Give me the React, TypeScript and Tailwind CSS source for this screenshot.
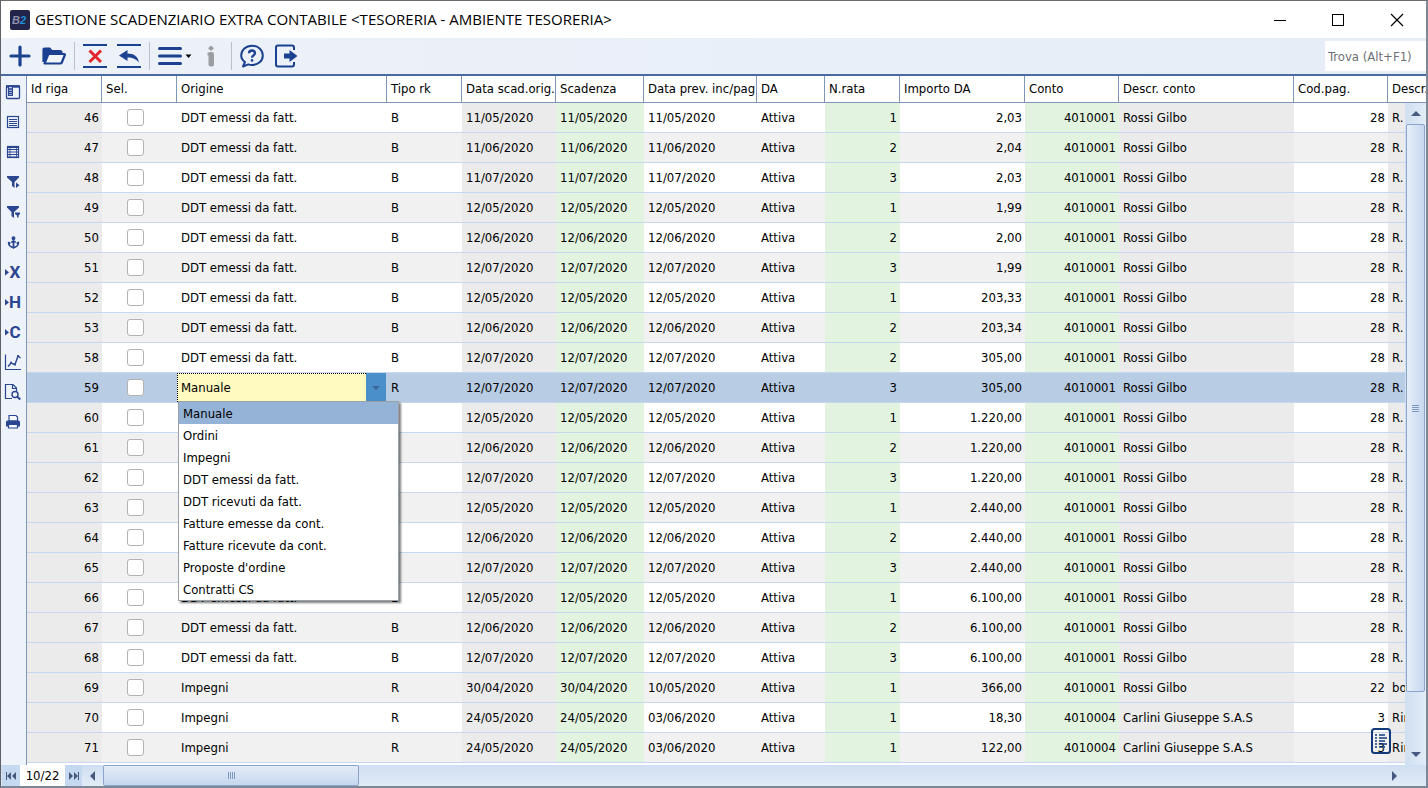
import React, { useState } from 'react';
import { clsx } from 'clsx';
import { Anchor } from 'lucide-react';

type Row = {
  id: number;
  origine: string;
  tipo: string;
  scadOrig: string;
  scadenza: string;
  prevista: string;
  rata: number;
  importo: string;
  conto: string;
  descrConto: string;
  codPag: number;
  descrPag: string;
};

const DDT = 'DDT emessi da fatt.';

const makeRow = (
  id: number,
  scadenza: string,
  rata: number,
  importo: string,
  extra: Partial<Row> = {}
): Row => ({
  id,
  origine: DDT,
  tipo: 'B',
  scadOrig: scadenza,
  scadenza,
  prevista: scadenza,
  rata,
  importo,
  conto: '4010001',
  descrConto: 'Rossi Gilbo',
  codPag: 28,
  descrPag: 'R.',
  ...extra,
});

const ROWS: Row[] = [
  makeRow(46, '11/05/2020', 1, '2,03'),
  makeRow(47, '11/06/2020', 2, '2,04'),
  makeRow(48, '11/07/2020', 3, '2,03'),
  makeRow(49, '12/05/2020', 1, '1,99'),
  makeRow(50, '12/06/2020', 2, '2,00'),
  makeRow(51, '12/07/2020', 3, '1,99'),
  makeRow(52, '12/05/2020', 1, '203,33'),
  makeRow(53, '12/06/2020', 2, '203,34'),
  makeRow(58, '12/07/2020', 2, '305,00'),
  makeRow(59, '12/07/2020', 3, '305,00', { origine: 'Manuale', tipo: 'R' }),
  makeRow(60, '12/05/2020', 1, '1.220,00'),
  makeRow(61, '12/06/2020', 2, '1.220,00'),
  makeRow(62, '12/07/2020', 3, '1.220,00'),
  makeRow(63, '12/05/2020', 1, '2.440,00'),
  makeRow(64, '12/06/2020', 2, '2.440,00'),
  makeRow(65, '12/07/2020', 3, '2.440,00'),
  makeRow(66, '12/05/2020', 1, '6.100,00'),
  makeRow(67, '12/06/2020', 2, '6.100,00'),
  makeRow(68, '12/07/2020', 3, '6.100,00'),
  makeRow(69, '30/04/2020', 1, '366,00', {
    origine: 'Impegni',
    tipo: 'R',
    prevista: '10/05/2020',
    codPag: 22,
    descrPag: 'bo',
  }),
  makeRow(70, '24/05/2020', 1, '18,30', {
    origine: 'Impegni',
    tipo: 'R',
    prevista: '03/06/2020',
    conto: '4010004',
    descrConto: 'Carlini Giuseppe S.A.S',
    codPag: 3,
    descrPag: 'Rin',
  }),
  makeRow(71, '24/05/2020', 1, '122,00', {
    origine: 'Impegni',
    tipo: 'R',
    prevista: '03/06/2020',
    conto: '4010004',
    descrConto: 'Carlini Giuseppe S.A.S',
    codPag: 3,
    descrPag: 'Rin',
  }),
];

const SELECTED_ID = 59;

const COLUMNS = [
  { label: 'Id riga', width: 'w-[75px]' },
  { label: 'Sel.', width: 'w-[75px]' },
  { label: 'Origine', width: 'w-[210px]' },
  { label: 'Tipo rk', width: 'w-[75px]' },
  { label: 'Data scad.orig.', width: 'w-[94px]' },
  { label: 'Scadenza', width: 'w-[88px]' },
  { label: 'Data prev. inc/pag', width: 'w-[113px]' },
  { label: 'DA', width: 'w-[68px]' },
  { label: 'N.rata', width: 'w-[75px]' },
  { label: 'Importo DA', width: 'w-[125px]' },
  { label: 'Conto', width: 'w-[94px]' },
  { label: 'Descr. conto', width: 'w-[175px]' },
  { label: 'Cod.pag.', width: 'w-[94px]' },
  { label: 'Descr.', width: '' },
];

const ORIGINI = [
  'Manuale',
  'Ordini',
  'Impegni',
  'DDT emessi da fatt.',
  'DDT ricevuti da fatt.',
  'Fatture emesse da cont.',
  'Fatture ricevute da cont.',
  "Proposte d'ordine",
  'Contratti CS',
];

const IconButton: React.FC<{
  label: string;
  className?: string;
  children: React.ReactNode;
}> = ({ label, className, children }) => (
  <button
    type="button"
    aria-label={label}
    className={clsx('flex shrink-0 items-center justify-center', className)}
  >
    {children}
  </button>
);

const Separator = () => <div className="mx-2 h-7 w-px bg-[#b9c0cc]" />;

const TitleBar = () => (
  <header className="flex h-[37px] shrink-0 items-center bg-white pl-[9px]">
    <svg width="20" height="20" viewBox="0 0 20 20" className="shrink-0">
      <rect width="20" height="20" rx="2" fill="#232449" />
      <text x="2" y="14" fontSize="11" fontWeight="700" fontStyle="italic" fontFamily="Liberation Sans, sans-serif" fill="#8b93ad">
        B<tspan fill="#1f8fd6">2</tspan>
      </text>
    </svg>
    <h1 className="ml-[5px] flex-1 truncate font-['Open_Sans','Noto_Sans',sans-serif] text-[15px] text-black">
      GESTIONE SCADENZIARIO EXTRA CONTABILE &lt;TESORERIA - AMBIENTE TESORERIA&gt;
    </h1>
    <div className="flex">
      <IconButton label="Riduci a icona" className="h-9 w-[58px]">
        <svg width="14" height="14" stroke="#000" fill="none">
          <path d="M1 7.5h12" />
        </svg>
      </IconButton>
      <IconButton label="Ingrandisci" className="h-9 w-[58px]">
        <svg width="14" height="14" stroke="#000" fill="none">
          <rect x="1.5" y="1.5" width="11" height="11" />
        </svg>
      </IconButton>
      <IconButton label="Chiudi" className="h-9 w-[59px]">
        <svg width="14" height="14" stroke="#000" fill="none" strokeWidth="1.2">
          <path d="M1 1l12 12M13 1L1 13" />
        </svg>
      </IconButton>
    </div>
  </header>
);

const Toolbar = () => (
  <div
    role="toolbar"
    aria-label="Comandi"
    className="flex h-9 shrink-0 items-center bg-linear-to-r from-[#edf2f9] to-[#e6edf7] pl-[7px]"
  >
    <IconButton label="Nuovo" className="w-6">
      <svg width="24" height="24" viewBox="0 0 24 24" stroke="#1b4190" strokeWidth="3.2" strokeLinecap="round">
        <path d="M3 12h18M12 3v18" />
      </svg>
    </IconButton>
    <IconButton label="Apri" className="ml-[10px] w-6">
      <svg width="24" height="24" viewBox="0 0 24 24" fill="none" stroke="#1b4190" strokeWidth="2.2" strokeLinejoin="round">
        <path d="M1.5 18V5.500q0-1 1-1h5l2 2.500h8.500q1.500 0 1.500 1.500V10" fill="#1b4190" />
        <path d="M2.500 19.500L6 11q.4-1 1.500-1h14.500q1.200 0 .8 1l-3 7.500q-.4 1-1.500 1z" fill="#f1f5fb" />
      </svg>
    </IconButton>
    <Separator />
    <IconButton label="Elimina" className="w-6">
      <svg width="24" height="26" viewBox="0 0 24 26" fill="none">
        <path d="M0 2h24M0 24h24" stroke="#1b4190" strokeWidth="2" />
        <path d="M6.500 7.500l11.500 11.500M18 7.500L6.500 19" stroke="#e1262d" strokeWidth="3" />
      </svg>
    </IconButton>
    <IconButton label="Annulla" className="ml-[10px] w-6">
      <svg width="24" height="26" viewBox="0 0 24 26" fill="none">
        <path d="M0 2h24M0 24h24" stroke="#1b4190" strokeWidth="2" />
        <path d="M2 12.500l8.500-5.500v3.500c6.500 0 10.500 3 11.500 9-3-3.500-6-5-11.500-5V18z" fill="#1b4190" />
      </svg>
    </IconButton>
    <Separator />
    <IconButton label="Menu" className="w-[34px]">
      <svg width="34" height="24" viewBox="0 0 34 24">
        <path d="M1.500 4.500h21M1.500 12h21M1.500 19.500h21" stroke="#1b4190" strokeWidth="3" strokeLinecap="round" />
        <path d="M27.500 10.500h6l-3 3.500z" fill="#000" />
      </svg>
    </IconButton>
    <IconButton label="Informazioni" className="ml-[7px] w-6">
      <svg width="24" height="24" viewBox="0 0 24 24" fill="#9a9da1">
        <path d="M12 1.500l3 2.700-3 2.700-3-2.700z" />
        <rect x="9.500" y="8" width="5.500" height="14.500" rx="2.200" />
        <path d="M8.500 9.500q0-1 1-1h2.500v3H8.500z" />
      </svg>
    </IconButton>
    <Separator />
    <IconButton label="Aiuto" className="w-6">
      <svg width="24" height="24" viewBox="0 0 24 24" fill="none" stroke="#1b4190" strokeWidth="2">
        <path d="M3 22.500l2-4.500C2.500 16.300 1.200 14 1.200 11.500 1.200 6 6 1.700 12 1.700S22.800 6 22.800 11.500 18 21 12 21c-1.300 0-2.600-.2-3.700-.6z" strokeLinejoin="round" />
        <path d="M9 9.300C9 7.500 10.300 6.500 12 6.500s3 1 3 2.700c0 2.200-3 2.300-3 4.500" strokeWidth="2.300" />
        <path d="M12 15.200v2.400" strokeWidth="2.400" />
      </svg>
    </IconButton>
    <IconButton label="Esci" className="ml-[10px] w-6">
      <svg width="24" height="24" viewBox="0 0 24 24" fill="none" stroke="#1b4190" strokeWidth="2">
        <path d="M20 6V3.500q0-2-2-2H4q-2 0-2 2v17q0 2 2 2h14q2 0 2-2V18" />
        <path d="M10 9.500h5.500V6l8 6-8 6v-3.500H10z" fill="#1b4190" stroke="none" />
      </svg>
    </IconButton>
    <input
      type="text"
      aria-label="Trova"
      placeholder="Trova (Alt+F1)"
      className="ml-auto h-[30px] w-[101px] bg-white px-[3px] outline-none placeholder:text-[#6d7076]"
    />
  </div>
);

const LetterIcon: React.FC<{ letter: string }> = ({ letter }) => (
  <svg width="18" height="18" viewBox="0 0 18 18" fill="#2a4690">
    <path d="M1 6l4 3.500L1 12.500z" />
    <text x="11" y="15" textAnchor="middle" fontSize="17" fontWeight="700" fontFamily="Liberation Sans Narrow, Roboto, sans-serif">
      {letter}
    </text>
  </svg>
);

const SIDE_TOOLS: { label: string; icon: React.ReactNode }[] = [
  {
    label: 'Colonne',
    icon: (
      <svg width="16" height="16" viewBox="0 0 16 16" fill="none" stroke="#2a4690">
        <rect x="1.500" y="2" width="13" height="12.500" rx="1" strokeWidth="1.300" />
        <path d="M1 2.500h14" strokeWidth="2.400" />
        <rect x="3.500" y="2.500" width="4" height="9" fill="#c9d5ea" />
        <path d="M3.500 5h4M3.500 7.300h4M3.500 9.500h4" strokeWidth="1.300" />
      </svg>
    ),
  },
  {
    label: 'Elenco',
    icon: (
      <svg width="16" height="16" viewBox="0 0 16 16" fill="none" stroke="#2a4690">
        <rect x="2.500" y="2.500" width="11" height="11" strokeWidth="1.200" />
        <path d="M4 5.500h8M4 7.500h8M4 9.500h8M4 11.500h8" />
      </svg>
    ),
  },
  {
    label: 'Griglia',
    icon: (
      <svg width="16" height="16" viewBox="0 0 16 16" fill="none" stroke="#2a4690">
        <rect x="2.500" y="2.500" width="11" height="11" strokeWidth="1.200" />
        <path d="M2 3.500h12M2 5.500h12M2 8h12M2 10.500h12M2 13h12" strokeWidth="1.200" />
        <path d="M5 2v12M11.500 2v12" strokeWidth=".8" />
      </svg>
    ),
  },
  {
    label: 'Filtra',
    icon: (
      <svg width="16" height="16" viewBox="0 0 16 16" fill="#2a4690">
        <path d="M2 2h12v1.500L9.500 8v6L7 12V8L2 3.500z" />
        <path d="M11 8.500l3.500 2.700-3.500 2.800z" />
      </svg>
    ),
  },
  {
    label: 'Filtro avanzato',
    icon: (
      <svg width="16" height="16" viewBox="0 0 16 16" fill="#2a4690">
        <path d="M2 2h12v1.500L9 8v6L6.500 12V8L2 3.500z" />
        <path d="M10 8.500h5V10l-1.500 1.500V14L12 13v-1.500L10 10z" />
      </svg>
    ),
  },
  { label: 'Blocca', icon: <Anchor size={13} color="#2a4690" strokeWidth={3.2} /> },
  { label: 'Esporta X', icon: <LetterIcon letter="X" /> },
  { label: 'Esporta H', icon: <LetterIcon letter="H" /> },
  { label: 'Esporta C', icon: <LetterIcon letter="C" /> },
  {
    label: 'Grafico',
    icon: (
      <svg width="18" height="18" viewBox="0 0 18 18" fill="none" stroke="#2a4690" strokeWidth="1.200">
        <path d="M1.500 1.500v15h15.500" />
        <path d="M4 13.500L7 10l4 1.500 3-8.500 2.500 2" strokeWidth="1.400" />
        <path d="M6.300 9.500h1.500M10.300 11.500h1.500M13.300 3h1.500" strokeWidth="2" />
      </svg>
    ),
  },
  {
    label: 'Anteprima',
    icon: (
      <svg width="18" height="18" viewBox="0 0 18 18" fill="none" stroke="#2a4690" strokeWidth="1.200">
        <path d="M12.500 8V5L9 1.500H1.500v14H8" />
        <path d="M8.500 1.500V5.500h4" />
        <circle cx="11" cy="11.500" r="3" strokeWidth="1.400" />
        <path d="M13.300 13.800l3 2.700" strokeWidth="2" />
      </svg>
    ),
  },
  {
    label: 'Stampa',
    icon: (
      <svg width="16" height="16" viewBox="0 0 16 16" fill="#2a4690">
        <path d="M4 1.500h7L12.500 3v4H4z" fill="#f4f7fc" stroke="#2a4690" strokeWidth="1.200" />
        <path d="M1 8q0-1.500 1.500-1.500h11Q15 6.500 15 8v4.500h-2v-2H3v2H1z" />
        <path d="M3.500 10.500h9v3.500h-9z" fill="#f4f7fc" stroke="#2a4690" strokeWidth="1.200" />
      </svg>
    ),
  },
];

const Sidebar = () => (
  <nav aria-label="Strumenti griglia" className="flex w-[26px] shrink-0 flex-col border-r border-[#7f95ba] bg-[#eef2f9] pt-px">
    {SIDE_TOOLS.map((tool) => (
      <IconButton key={tool.label} label={tool.label} className="h-[30px] w-6">
        {tool.icon}
      </IconButton>
    ))}
  </nav>
);

const OrigineEditor = () => {
  const [value, setValue] = useState('Manuale');
  const [open, setOpen] = useState(true);

  const choose = (item: string) => {
    setValue(item);
    setOpen(false);
  };

  return (
    <div className="relative flex h-[29px] pr-px">
      <select
        aria-label="Origine"
        value={value}
        onChange={(e) => choose(e.target.value)}
        className="min-w-0 flex-1 appearance-none border-t border-l border-dotted border-black bg-[#fffac0] pl-[3px] outline-none"
      >
        {ORIGINI.map((item) => (
          <option key={item}>{item}</option>
        ))}
      </select>
      <button
        type="button"
        aria-label="Apri elenco"
        aria-expanded={open}
        onClick={() => setOpen(!open)}
        className="flex w-5 items-center justify-center bg-[#4a8fc7]"
      >
        <svg width="8" height="4" fill="#3f6398">
          <path d="M0 0h8L4 4z" />
        </svg>
      </button>
      {open && (
        <ul
          role="listbox"
          aria-label="Origini"
          className="absolute top-7 left-px z-10 w-[221px] border border-[#9aa0a8] bg-white shadow-[2px_2px_2px_rgba(0,0,0,0.5)]"
        >
          {ORIGINI.map((item) => (
            <li
              key={item}
              role="option"
              aria-selected={item === value}
              onClick={() => choose(item)}
              className={clsx('h-[22px] px-1 leading-6', item === value && 'bg-[#95b3d7]')}
            >
              {item}
            </li>
          ))}
        </ul>
      )}
    </div>
  );
};

const GridRow: React.FC<{ row: Row; striped: boolean }> = ({ row, striped }) => {
  const selected = row.id === SELECTED_ID;
  const grey = selected ? '' : 'bg-[#ebebeb]';
  const green = selected ? '' : 'bg-[#e2f4e0]';
  const cell = 'overflow-hidden border-b border-[#c5d8ee] pl-1 whitespace-nowrap';
  const num = 'overflow-hidden border-b border-[#c5d8ee] pr-[3px] text-right whitespace-nowrap';

  return (
    <tr className={clsx('h-[30px]', selected ? 'bg-[#b8cce4]' : striped ? 'bg-[#f1f1f1]' : 'bg-white')}>
      <td className={clsx(num, grey)}>{row.id}</td>
      <td className="border-b border-[#c5d8ee] pr-2">
        <input
          type="checkbox"
          aria-label={`Seleziona riga ${row.id}`}
          className="mx-auto block size-[17px] appearance-none rounded-[3px] border border-[#b2b2b2] bg-white checked:bg-[#4a8fc7]"
        />
      </td>
      {selected ? (
        <td className="border-b border-[#c5d8ee] p-0">
          <OrigineEditor />
        </td>
      ) : (
        <td className={cell}>{row.origine}</td>
      )}
      <td className={cell}>{row.tipo}</td>
      <td className={clsx(cell, grey)}>{row.scadOrig}</td>
      <td className={clsx(cell, green)}>{row.scadenza}</td>
      <td className={cell}>{row.prevista}</td>
      <td className={cell}>Attiva</td>
      <td className={clsx(num, green)}>{row.rata}</td>
      <td className={num}>{row.importo}</td>
      <td className={clsx(num, green)}>{row.conto}</td>
      <td className={clsx(cell, grey)}>{row.descrConto}</td>
      <td className={num}>{row.codPag}</td>
      <td className={clsx(cell, grey)}>{row.descrPag}</td>
    </tr>
  );
};

const Grid = () => (
  <table className="w-full min-w-[1390px] table-fixed border-separate border-spacing-0">
    <thead>
      <tr className="h-[27px] bg-white">
        {COLUMNS.map((col) => (
          <th
            key={col.label}
            scope="col"
            className={clsx(
              'overflow-hidden border-b border-[#7f95ba] pl-1 text-left font-normal whitespace-nowrap not-last:border-r',
              col.width
            )}
          >
            {col.label}
          </th>
        ))}
      </tr>
    </thead>
    <tbody>
      {ROWS.map((row, i) => (
        <GridRow key={row.id} row={row} striped={i % 2 === 1} />
      ))}
    </tbody>
  </table>
);

const VerticalScrollbar = () => (
  <div className="absolute top-[27px] right-0 bottom-0 flex w-[21px] flex-col items-center bg-linear-to-r from-[#cfdff2] to-[#e3ecf7]">
    <IconButton label="Scorri su" className="h-[21px] w-full">
      <svg width="10" height="5" fill="#465a80">
        <path d="M5 0l5 5H0z" />
      </svg>
    </IconButton>
    <div className="flex w-[19px] flex-[568] flex-col items-center justify-center gap-px rounded-[2px] border border-[#8aa4cb] bg-linear-to-r from-[#e6eef8] to-[#c6d8ee]">
      <i className="h-px w-[7px] bg-[#7f9ac4]" />
      <i className="h-px w-[7px] bg-[#7f9ac4]" />
      <i className="h-px w-[7px] bg-[#7f9ac4]" />
      <i className="h-px w-[7px] bg-[#7f9ac4]" />
    </div>
    <div className="flex-[52]" />
    <IconButton label="Scorri giù" className="h-[21px] w-full">
      <svg width="10" height="5" fill="#465a80">
        <path d="M0 0h10L5 5z" />
      </svg>
    </IconButton>
  </div>
);

const BottomBar = () => (
  <footer className="flex h-[21px] shrink-0 bg-linear-to-b from-[#cfdff2] to-[#e1ebf6] pl-px">
    <IconButton label="Prima riga" className="w-[18px] bg-[#c5d9f1]">
      <svg width="10" height="8" fill="#465a80">
        <path d="M0 0h1v8H0zM5 0v8L1 4zM10 0v8L6 4z" />
      </svg>
    </IconButton>
    <span className="w-[45px] bg-white text-center leading-[21px]">10/22</span>
    <IconButton label="Ultima riga" className="w-[17px] bg-[#c5d9f1]">
      <svg width="10" height="8" fill="#465a80">
        <path d="M0 0l4 4-4 4zM5 0l4 4-4 4zM9 0h1v8H9z" />
      </svg>
    </IconButton>
    <IconButton label="Scorri a sinistra" className="w-[21px]">
      <svg width="5" height="10" fill="#465a80">
        <path d="M5 0v10L0 5z" />
      </svg>
    </IconButton>
    <div className="flex flex-1">
      <div className="flex w-1/5 items-center justify-center gap-px rounded-[2px] border border-[#8aa4cb] bg-linear-to-b from-[#e3ecf7] to-[#c6d8ee]">
        <i className="h-[7px] w-px bg-[#7f9ac4]" />
        <i className="h-[7px] w-px bg-[#7f9ac4]" />
        <i className="h-[7px] w-px bg-[#7f9ac4]" />
        <i className="h-[7px] w-px bg-[#7f9ac4]" />
      </div>
    </div>
    <IconButton label="Scorri a destra" className="mr-[21px] w-[21px]">
      <svg width="5" height="10" fill="#465a80">
        <path d="M0 0l5 5-5 5z" />
      </svg>
    </IconButton>
  </footer>
);

const App: React.FC = () => {
  return (
    <div className="flex h-screen flex-col overflow-hidden border-t border-r-2 border-b-2 border-l border-t-[#6b6b6b] border-r-[#7c8797] border-b-[#7c8797] border-l-[#5f6168] bg-white font-['DejaVu_Sans_Condensed','Noto_Sans',sans-serif] text-[13px] text-black">
      <TitleBar />
      <Toolbar />
      <main className="flex min-h-0 flex-1 border-t-2 border-[#4a6aa0]">
        <Sidebar />
        <div className="relative min-w-0 flex-1 overflow-hidden">
          <Grid />
          <VerticalScrollbar />
          <button type="button" aria-label="Dettagli riga" className="absolute right-[35px] bottom-[11px]">
            <svg width="20" height="26" viewBox="0 0 20 26" fill="none" stroke="#123a7a">
              <rect x="1" y="1" width="18" height="24" rx="2.500" strokeWidth="2" />
              <path d="M8 7h6M8 10h8M8 13h6M8 16h8M8 19h6" strokeWidth="1.600" />
              <path d="M4 7h2M4 10h2M4 13h2M4 16h2M4 19h2" strokeWidth="1.600" />
            </svg>
          </button>
        </div>
      </main>
      <BottomBar />
    </div>
  );
};

export default App;
